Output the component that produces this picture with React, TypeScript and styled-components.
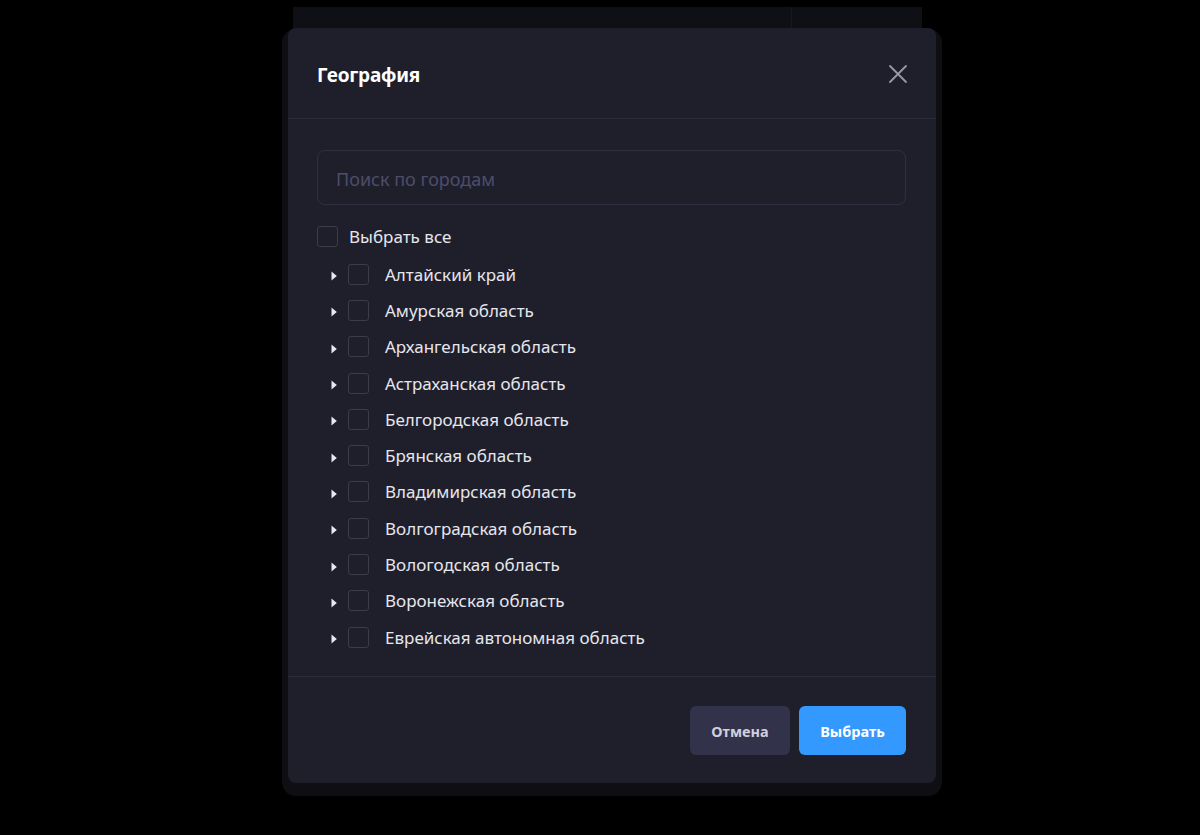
import React, { useState } from 'react';
import styled, { createGlobalStyle } from 'styled-components';

const GlobalStyle = createGlobalStyle`
  html, body {
    margin: 0;
    padding: 0;
    background: #000000;
    font-family: 'Segoe UI', 'Noto Sans', 'Open Sans', sans-serif;
  }
`;

const Page = styled.div`
  position: relative;
  width: 1200px;
  height: 835px;
  background: #000000;
  overflow: hidden;
`;

const UnderlyingPanel = styled.div`
  margin: 7px 0 0 293px;
  width: 629px;
  height: 200px;
  background: #0f1015;
  display: grid;
  grid-template-columns: 498px 1px 1fr;
`;

const PanelDivider = styled.div`
  background: #181920;
`;

const Overlay = styled.div`
  position: absolute;
  top: 28px;
  left: 288px;
`;

const Modal = styled.div`
  width: 648px;
  height: 755px;
  background: #1f1f2c;
  border-radius: 8px;
  box-shadow: 0 7px 0 6px #0e0e13;
  display: flex;
  flex-direction: column;
`;

const Header = styled.div`
  height: 91px;
  box-sizing: border-box;
  padding: 0 26px 0 29px;
  display: flex;
  align-items: center;
  justify-content: space-between;
  border-bottom: 1px solid #2a2a3a;
`;

const Title = styled.div`
  color: #ffffff;
  font-size: 19px;
  font-weight: 700;
  letter-spacing: -0.2px;
  margin-top: 3px;
`;

const CloseButton = styled.button`
  background: none;
  border: none;
  padding: 0;
  width: 24px;
  height: 24px;
  display: flex;
  align-items: center;
  justify-content: center;
  cursor: pointer;
  margin-top: 1px;
`;

const Body = styled.div`
  flex: 1;
  padding: 31px 30px 0 29px;
  display: flex;
  flex-direction: column;
`;

const SearchInput = styled.input`
  height: 55px;
  box-sizing: border-box;
  width: 100%;
  background: transparent;
  border: 1px solid #2f2f42;
  border-radius: 8px;
  padding: 2px 18px 0;
  font-family: inherit;
  font-size: 18px;
  color: #e0e0e8;
  outline: none;

  &::placeholder {
    color: #4d4d69;
  }
`;

const List = styled.div`
  margin-top: 20px;
  display: flex;
  flex-direction: column;
`;

const Row = styled.label<{ $nested?: boolean }>`
  display: flex;
  align-items: center;
  height: ${(p) => (p.$nested ? '36.3px' : '22px')};
  margin-bottom: ${(p) => (p.$nested ? '0' : '9px')};
  color: #e6e6ec;
  font-size: 17px;
  cursor: pointer;
`;

const Arrow = styled.span`
  width: 31px;
  display: flex;
  justify-content: flex-end;
  padding-right: 11px;
  box-sizing: border-box;
  margin-top: 4px;
`;

const Box = styled.span<{ $checked?: boolean }>`
  width: 21px;
  height: 21px;
  box-sizing: border-box;
  border: 1px solid #3b3b4a;
  border-radius: 3px;
  background: ${(p) => (p.$checked ? '#3399ff' : 'transparent')};
  flex-shrink: 0;
`;

const Label = styled.span<{ $gap: number }>`
  margin-left: ${(p) => p.$gap}px;
  white-space: nowrap;
`;

const Footer = styled.div`
  height: 107px;
  box-sizing: border-box;
  border-top: 1px solid #2a2a3a;
  padding: 29px 30px 0 0;
  display: flex;
  justify-content: flex-end;
  gap: 9px;
`;

const Button = styled.button<{ $primary?: boolean }>`
  height: 49px;
  width: ${(p) => (p.$primary ? '107px' : '100px')};
  padding: 0;
  border: none;
  border-radius: 6px;
  font-family: inherit;
  font-size: 14.5px;
  font-weight: 700;
  background: ${(p) => (p.$primary ? '#3399ff' : '#32324a')};
  color: ${(p) => (p.$primary ? '#ffffff' : '#cfcfdc')};
  cursor: pointer;
`;

const regions = [
  'Алтайский край',
  'Амурская область',
  'Архангельская область',
  'Астраханская область',
  'Белгородская область',
  'Брянская область',
  'Владимирская область',
  'Волгоградская область',
  'Вологодская область',
  'Воронежская область',
  'Еврейская автономная область',
];

const CaretIcon = () => (
  <svg width="6" height="10" viewBox="0 0 6 10">
    <path d="M0.5 0.5 L5.8 5 L0.5 9.5 Z" fill="#e8e8ee" />
  </svg>
);

const CloseIcon = () => (
  <svg width="20" height="20" viewBox="0 0 20 20">
    <path d="M2 2 L18 18 M18 2 L2 18" stroke="#9a9aa6" strokeWidth="1.8" strokeLinecap="round" />
  </svg>
);

const App = () => {
  const [checked, setChecked] = useState<Record<string, boolean>>({});
  const [query, setQuery] = useState('');

  const toggle = (name: string) => setChecked((c) => ({ ...c, [name]: !c[name] }));
  const visible = regions.filter((r) => r.toLowerCase().includes(query.toLowerCase()));

  return (
    <Page>
      <GlobalStyle />
      <UnderlyingPanel>
        <div />
        <PanelDivider />
        <div />
      </UnderlyingPanel>
      <Overlay>
        <Modal>
          <Header>
            <Title>География</Title>
            <CloseButton aria-label="Закрыть">
              <CloseIcon />
            </CloseButton>
          </Header>
          <Body>
            <SearchInput
              placeholder="Поиск по городам"
              value={query}
              onChange={(e) => setQuery(e.target.value)}
            />
            <List>
              <Row onClick={() => toggle('all')}>
                <Box $checked={checked.all} />
                <Label $gap={11}>Выбрать все</Label>
              </Row>
              {visible.map((name) => (
                <Row $nested key={name} onClick={() => toggle(name)}>
                  <Arrow>
                    <CaretIcon />
                  </Arrow>
                  <Box $checked={checked[name]} />
                  <Label $gap={16}>{name}</Label>
                </Row>
              ))}
            </List>
          </Body>
          <Footer>
            <Button>Отмена</Button>
            <Button $primary>Выбрать</Button>
          </Footer>
        </Modal>
      </Overlay>
    </Page>
  );
};

export default App;
